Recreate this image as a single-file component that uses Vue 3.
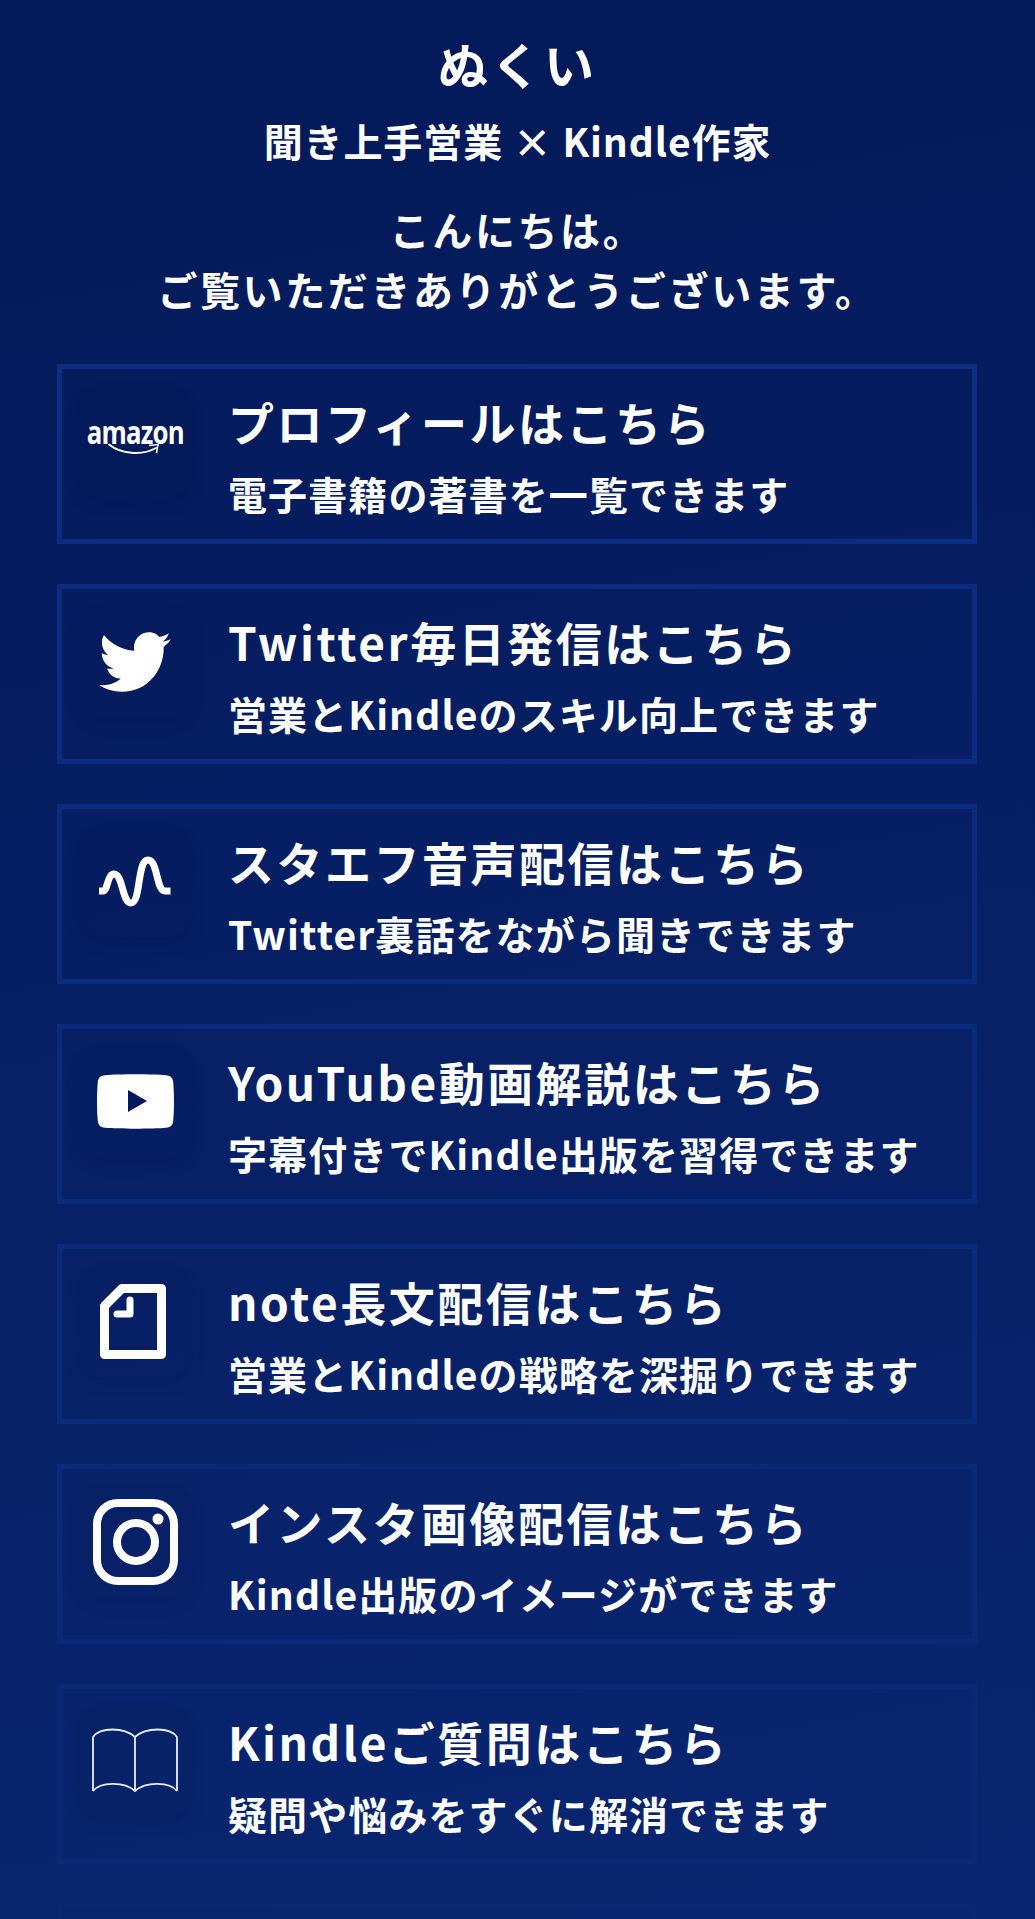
<script setup>
const links = [
  { icon: 'amazon', title: 'プロフィールはこちら', sub: '電子書籍の著書を一覧できます' },
  { icon: 'twitter', title: 'Twitter毎日発信はこちら', sub: '営業とKindleのスキル向上できます' },
  { icon: 'stand', title: 'スタエフ音声配信はこちら', sub: 'Twitter裏話をながら聞きできます' },
  { icon: 'youtube', title: 'YouTube動画解説はこちら', sub: '字幕付きでKindle出版を習得できます' },
  { icon: 'note', title: 'note長文配信はこちら', sub: '営業とKindleの戦略を深掘りできます' },
  { icon: 'instagram', title: 'インスタ画像配信はこちら', sub: 'Kindle出版のイメージができます' },
  { icon: 'book', title: 'Kindleご質問はこちら', sub: '疑問や悩みをすぐに解消できます' },
  { icon: '', title: '', sub: '' }
]

// the outline fades into the background towards the bottom of the page
const borderColor = (index) => {
  const t = index / 7
  const g = Math.round(45 - 6 * t)
  const b = Math.round(130 - 16 * t)
  return `rgb(11, ${g}, ${b})`
}
</script>

<template>
  <div class="page">
    <header class="head">
      <h1 class="name">ぬくい</h1>
      <p class="role">聞き上手営業 × Kindle作家</p>
      <p class="hello">こんにちは。<br />ご覧いただきありがとうございます。</p>
    </header>

    <div class="list">
      <a v-for="(link, index) in links" :key="index" class="card" :style="{ borderColor: borderColor(index) }">
        <div class="tile">
          <div v-if="link.icon === 'amazon'" class="amazon">
            <span class="amazon-word">amazon</span>
            <svg class="smile" width="54" height="13" viewBox="0 0 54 13">
              <path d="M1 1.500C13 11 34 13 48 5" fill="none" stroke="#fff" stroke-width="2" stroke-linecap="round" />
              <path d="M41 2.500L50 1.500L48.500 10" fill="none" stroke="#fff" stroke-width="1.500" />
            </svg>
          </div>
          <svg v-else-if="link.icon === 'twitter'" width="72" height="60" viewBox="0 2.2 24 19.6" preserveAspectRatio="none">
            <path fill="#fff" d="M23.953 4.57a10 10 0 01-2.825.775 4.958 4.958 0 002.163-2.723c-.951.555-2.005.959-3.127 1.184a4.92 4.92 0 00-8.384 4.482C7.69 8.095 4.067 6.13 1.64 3.162a4.822 4.822 0 00-.666 2.475c0 1.71.87 3.213 2.188 4.096a4.904 4.904 0 01-2.228-.616v.06a4.923 4.923 0 003.946 4.827 4.996 4.996 0 01-2.212.085 4.936 4.936 0 004.604 3.417 9.867 9.867 0 01-6.102 2.105c-.39 0-.779-.023-1.17-.067a13.995 13.995 0 007.557 2.209c9.053 0 13.998-7.496 13.998-13.985 0-.21 0-.42-.015-.63A9.935 9.935 0 0024 4.59z" />
          </svg>
          <svg v-else-if="link.icon === 'stand'" width="72" height="52" viewBox="0 0 72 52">
            <path d="M0 35H4C9 35 8 18 15 18C24 18 23 47 32 47C42 47 38 4 49 4C59 4 57 35 66 35H71.500" fill="none" stroke="#fff" stroke-width="7" stroke-linejoin="round" />
          </svg>
          <svg v-else-if="link.icon === 'youtube'" width="77" height="55" viewBox="0 0 77 55">
            <path fill="#fff" d="M8 1.2C22 0 55 0 69 1.2C74 1.7 76 4 76.300 9C77.200 20 77.200 35 76.300 46C76 51 74 53.300 69 53.800C55 55 22 55 8 53.800C3 53.300 1 51 .7 46C-.2 35 -.2 20 .7 9C1 4 3 1.700 8 1.200Z" />
            <path fill="#03195a" d="M31 16L50 27L31 38Z" />
          </svg>
          <svg v-else-if="link.icon === 'note'" class="note-icon" width="66" height="75" viewBox="0 0 66 75">
            <path d="M4.500 22L22 4.500H61.500V70.500H4.500Z" fill="none" stroke="#fff" stroke-width="9" stroke-linejoin="round" />
            <path d="M30 16V30H17" fill="none" stroke="#fff" stroke-width="7" stroke-linecap="round" stroke-linejoin="round" />
          </svg>
          <svg v-else-if="link.icon === 'instagram'" width="85" height="86" viewBox="0 0 85 86">
            <rect x="4" y="4" width="77" height="78" rx="21" fill="none" stroke="#fff" stroke-width="8" />
            <circle cx="43" cy="43" r="19" fill="none" stroke="#fff" stroke-width="8" />
            <circle cx="65" cy="20" r="5.500" fill="#fff" />
          </svg>
          <svg v-else-if="link.icon === 'book'" class="book-icon" width="86" height="65" viewBox="0 0 86 65">
            <path d="M1 64V10C8 0 32 0 43 10C54 0 78 0 85 10V64M1 64C8 55 32 54 43 64C54 54 78 55 85 64M43 10V64" fill="none" stroke="#e8edf8" stroke-width="1.800" />
          </svg>
        </div>
        <div class="copy">
          <div class="title">{{ link.title }}</div>
          <div class="sub">{{ link.sub }}</div>
        </div>
      </a>
    </div>
  </div>
</template>

<style>
html, body {
  margin: 0;
  background: #06205f;
}
</style>

<style scoped>
.page {
  height: 1919px;
  overflow: hidden;
  background: linear-gradient(170deg, #031958 0%, #0a2672 100%);
  color: #fff;
  font-family: "Noto Sans CJK JP", "Noto Sans", sans-serif;
  font-weight: 700;
}

.head {
  text-align: center;
  padding-top: 32px;
}

.name {
  margin: 0;
  font-size: 50px;
  line-height: 62px;
  letter-spacing: 3px;
  font-weight: 700;
}

.role {
  margin: 21px 0 0;
  font-size: 39px;
  line-height: 50px;
  letter-spacing: .9px;
}

.hello {
  margin: 34px 0 0;
  font-size: 40px;
  line-height: 60px;
  letter-spacing: 2.600px;
}

.list {
  margin: 45px 58px 0 57px;
  display: flex;
  flex-direction: column;
  gap: 40px;
}

.card {
  display: flex;
  height: 180px;
  box-sizing: border-box;
  border: 5px solid;
  padding: 16px 0 0 15px;
  flex-shrink: 0;
}

.tile {
  width: 116px;
  height: 113px;
  flex-shrink: 0;
  border-radius: 26px;
  background: rgba(1, 12, 66, 0.08);
  box-shadow: 0 8px 14px rgba(1, 10, 60, 0.12);
  display: flex;
  align-items: center;
  justify-content: center;
}

.amazon {
  display: flex;
  flex-direction: column;
  align-items: center;
  margin-bottom: 10px;
}

.amazon-word {
  font-family: "Open Sans", sans-serif;
  font-size: 33px;
  line-height: 28px;
  font-weight: 700;
  letter-spacing: -1px;
  transform: scaleX(.78);
}

.smile {
  margin-top: -3px;
}

.note-icon {
  margin-right: 4px;
}

.book-icon {
  margin-bottom: 4px;
}

.copy {
  margin-left: 35px;
  min-width: 0;
}

.title {
  font-size: 46px;
  line-height: 72px;
  letter-spacing: 2.500px;
  white-space: nowrap;
}

.sub {
  margin-top: 6px;
  font-size: 39px;
  line-height: 60px;
  letter-spacing: 1.100px;
  white-space: nowrap;
}
</style>
